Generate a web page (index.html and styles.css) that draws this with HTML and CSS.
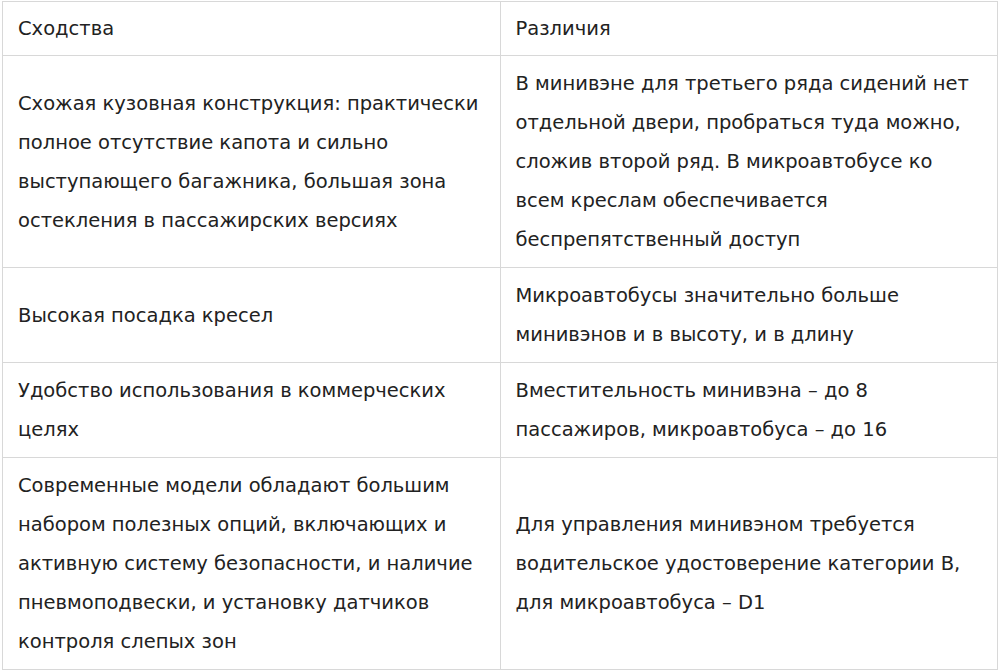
FILE: index.html
```html
<!DOCTYPE html>
<html lang="ru">
<head>
<meta charset="utf-8">
<title>Сходства и различия</title>
<link rel="stylesheet" href="styles.css">
</head>
<body>
<table class="cmp">
  <thead>
    <tr>
      <th class="cell head">Сходства</th>
      <th class="cell head">Различия</th>
    </tr>
  </thead>
  <tbody>
    <tr>
      <td class="cell">Схожая кузовная конструкция: практически полное отсутствие капота и сильно выступающего багажника, большая зона остекления в пассажирских версиях</td>
      <td class="cell">В минивэне для третьего ряда сидений нет отдельной двери, пробраться туда можно, сложив второй ряд. В микроавтобусе ко всем креслам обеспечивается беспрепятственный доступ</td>
    </tr>
    <tr>
      <td class="cell">Высокая посадка кресел</td>
      <td class="cell">Микроавтобусы значительно больше минивэнов и в высоту, и в длину</td>
    </tr>
    <tr>
      <td class="cell">Удобство использования в коммерческих целях</td>
      <td class="cell">Вместительность минивэна – до 8 пассажиров, микроавтобуса – до 16</td>
    </tr>
    <tr>
      <td class="cell">Современные модели обладают большим набором полезных опций, включающих и активную систему безопасности, и наличие пневмоподвески, и установку датчиков контроля слепых зон</td>
      <td class="cell">Для управления минивэном требуется водительское удостоверение категории B, для микроавтобуса – D1</td>
    </tr>
  </tbody>
</table>
</body>
</html>
```

FILE: styles.css
```css
html, body {
  margin: 0;
  background: #ffffff;
}
body {
  padding: 1px 2px 0 2px;
  font-family: Tahoma, "DejaVu Sans", sans-serif;
  font-size: 19.5px;
  color: #222222;
}
.cmp {
  width: 996px;
  border-collapse: collapse;
  table-layout: fixed;
}
.cell {
  border: 1px solid #d8d8d8;
  padding: 8px 15px;
  line-height: 39px;
  text-align: left;
  vertical-align: middle;
  font-weight: normal;
  width: 50%;
}
.head {
  padding-top: 7px;
  padding-bottom: 7px;
}
```
